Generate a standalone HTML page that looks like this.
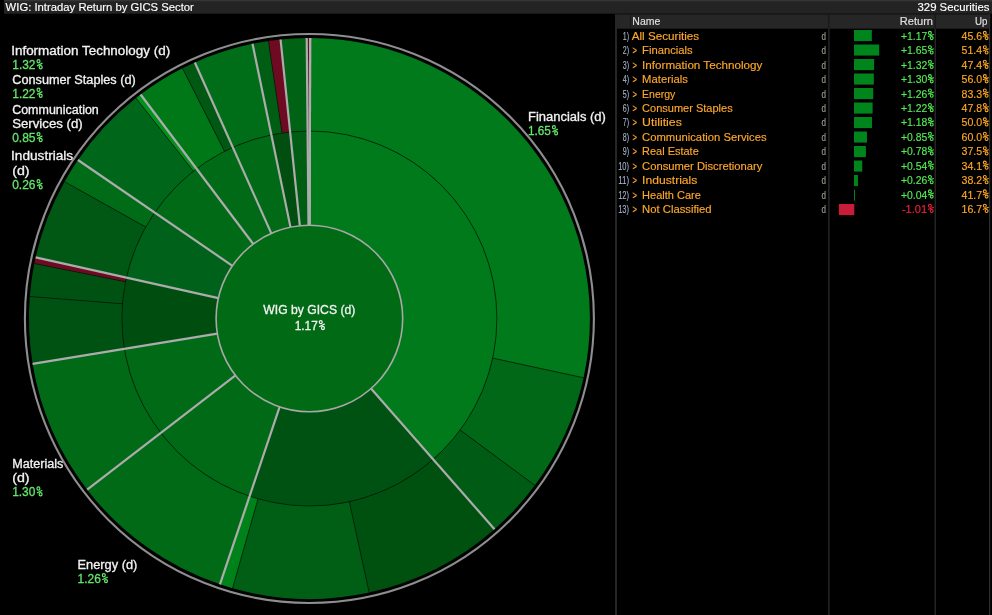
<!DOCTYPE html>
<html><head><meta charset="utf-8">
<style>
html,body{margin:0;padding:0;background:#000;width:992px;height:615px;overflow:hidden}
svg{position:absolute;left:0;top:0;will-change:transform}
text{font-family:"Liberation Sans",sans-serif;white-space:pre}
</style></head><body>
<svg width="992" height="615">
<rect x="4" y="0" width="988" height="13.7" fill="#232323"/>
<rect x="4" y="0" width="988" height="1.3" fill="#353535"/>
<rect x="615" y="14.3" width="375" height="14.4" fill="#262626"/>
<rect x="630" y="14.3" width="1" height="14.4" fill="#1a1a1a"/>
<rect x="615" y="14.3" width="2" height="600.7" fill="#262626"/>
<rect x="828.3" y="14.3" width="1.2" height="600.7" fill="#2e2e2e"/>
<rect x="828.3" y="14.3" width="1.2" height="14.4" fill="#141414"/>
<rect x="934.6" y="14.3" width="1.2" height="600.7" fill="#2e2e2e"/>
<rect x="934.6" y="14.3" width="1.2" height="14.4" fill="#141414"/>
<rect x="989" y="14.3" width="1.2" height="600.7" fill="#2e2e2e"/>
<circle cx="309.4" cy="318.5" r="284.5" fill="none" stroke="#8e8e8e" stroke-width="2.1"/>
<path d="M309.89,131.00 A187.5,187.5 0 0 1 433.15,459.36 L370.98,388.59 A93.3,93.3 0 0 0 309.64,225.20 Z" fill="#007a1a"/>
<path d="M310.13,38.00 A280.5,280.5 0 0 1 583.57,377.78 L492.67,358.12 A187.5,187.5 0 0 0 309.89,131.00 Z" fill="#007a1a"/>
<path d="M583.57,377.78 A280.5,280.5 0 0 1 534.88,485.35 L460.12,430.03 A187.5,187.5 0 0 0 492.67,358.12 Z" fill="#006816"/>
<path d="M534.88,485.35 A280.5,280.5 0 0 1 494.53,529.23 L433.15,459.36 A187.5,187.5 0 0 0 460.12,430.03 Z" fill="#005c14"/>
<path d="M433.15,459.36 A187.5,187.5 0 0 1 249.60,496.21 L279.64,406.93 A93.3,93.3 0 0 0 370.98,388.59 Z" fill="#005212"/>
<path d="M494.53,529.23 A280.5,280.5 0 0 1 369.16,592.56 L349.34,501.70 A187.5,187.5 0 0 0 433.15,459.36 Z" fill="#005010"/>
<path d="M369.16,592.56 A280.5,280.5 0 0 1 232.55,588.27 L258.03,498.83 A187.5,187.5 0 0 0 349.34,501.70 Z" fill="#005f14"/>
<path d="M232.55,588.27 A280.5,280.5 0 0 1 219.93,584.35 L249.60,496.21 A187.5,187.5 0 0 0 258.03,498.83 Z" fill="#00821b"/>
<path d="M249.60,496.21 A187.5,187.5 0 0 1 160.85,432.90 L235.48,375.43 A93.3,93.3 0 0 0 279.64,406.93 Z" fill="#006a17"/>
<path d="M219.93,584.35 A280.5,280.5 0 0 1 87.16,489.65 L160.85,432.90 A187.5,187.5 0 0 0 249.60,496.21 Z" fill="#006a17"/>
<path d="M160.85,432.90 A187.5,187.5 0 0 1 124.36,348.80 L217.33,333.58 A93.3,93.3 0 0 0 235.48,375.43 Z" fill="#006a17"/>
<path d="M87.16,489.65 A280.5,280.5 0 0 1 32.59,363.83 L124.36,348.80 A187.5,187.5 0 0 0 160.85,432.90 Z" fill="#006a17"/>
<path d="M124.36,348.80 A187.5,187.5 0 0 1 126.42,277.60 L218.35,298.15 A93.3,93.3 0 0 0 217.33,333.58 Z" fill="#004d10"/>
<path d="M32.59,363.83 A280.5,280.5 0 0 1 29.76,296.49 L122.48,303.79 A187.5,187.5 0 0 0 124.36,348.80 Z" fill="#005212"/>
<path d="M29.76,296.49 A280.5,280.5 0 0 1 34.34,263.54 L125.53,281.76 A187.5,187.5 0 0 0 122.48,303.79 Z" fill="#005212"/>
<path d="M34.34,263.54 A280.5,280.5 0 0 1 35.66,257.31 L126.42,277.60 A187.5,187.5 0 0 0 125.53,281.76 Z" fill="#6e0a22"/>
<path d="M126.42,277.60 A187.5,187.5 0 0 1 154.69,212.57 L232.42,265.79 A93.3,93.3 0 0 0 218.35,298.15 Z" fill="#00621a"/>
<path d="M35.66,257.31 A280.5,280.5 0 0 1 64.55,181.66 L145.73,227.03 A187.5,187.5 0 0 0 126.42,277.60 Z" fill="#005814"/>
<path d="M64.55,181.66 A280.5,280.5 0 0 1 77.96,160.03 L154.69,212.57 A187.5,187.5 0 0 0 145.73,227.03 Z" fill="#006c17"/>
<path d="M154.69,212.57 A187.5,187.5 0 0 1 196.56,168.76 L253.25,243.99 A93.3,93.3 0 0 0 232.42,265.79 Z" fill="#006a16"/>
<path d="M77.96,160.03 A280.5,280.5 0 0 1 135.94,98.07 L193.45,171.15 A187.5,187.5 0 0 0 154.69,212.57 Z" fill="#00661a"/>
<path d="M135.94,98.07 A280.5,280.5 0 0 1 140.59,94.48 L196.56,168.76 A187.5,187.5 0 0 0 193.45,171.15 Z" fill="#00921c"/>
<path d="M196.56,168.76 A187.5,187.5 0 0 1 232.84,147.34 L271.30,233.33 A93.3,93.3 0 0 0 253.25,243.99 Z" fill="#006a16"/>
<path d="M140.59,94.48 A280.5,280.5 0 0 1 182.49,68.35 L224.57,151.29 A187.5,187.5 0 0 0 196.56,168.76 Z" fill="#007818"/>
<path d="M182.49,68.35 A280.5,280.5 0 0 1 194.86,62.45 L232.84,147.34 A187.5,187.5 0 0 0 224.57,151.29 Z" fill="#005812"/>
<path d="M232.84,147.34 A187.5,187.5 0 0 1 271.38,134.90 L290.48,227.14 A93.3,93.3 0 0 0 271.30,233.33 Z" fill="#006a16"/>
<path d="M194.86,62.45 A280.5,280.5 0 0 1 252.52,43.83 L271.38,134.90 A187.5,187.5 0 0 0 232.84,147.34 Z" fill="#006e18"/>
<path d="M271.38,134.90 A187.5,187.5 0 0 1 290.13,131.99 L299.81,225.69 A93.3,93.3 0 0 0 290.48,227.14 Z" fill="#004f10"/>
<path d="M252.52,43.83 A280.5,280.5 0 0 1 268.42,41.01 L282.01,133.01 A187.5,187.5 0 0 0 271.38,134.90 Z" fill="#005e14"/>
<path d="M268.42,41.01 A280.5,280.5 0 0 1 280.57,39.49 L290.13,131.99 A187.5,187.5 0 0 0 282.01,133.01 Z" fill="#6e0a22"/>
<path d="M290.13,131.99 A187.5,187.5 0 0 1 307.60,131.01 L308.50,225.20 A93.3,93.3 0 0 0 299.81,225.69 Z" fill="#005e14"/>
<path d="M280.57,39.49 A280.5,280.5 0 0 1 306.71,38.01 L307.60,131.01 A187.5,187.5 0 0 0 290.13,131.99 Z" fill="#006214"/>
<path d="M307.60,131.01 A187.5,187.5 0 0 1 309.89,131.00 L309.64,225.20 A93.3,93.3 0 0 0 308.50,225.20 Z" fill="#6e0a22"/>
<path d="M306.71,38.01 A280.5,280.5 0 0 1 310.13,38.00 L309.89,131.00 A187.5,187.5 0 0 0 307.60,131.01 Z" fill="#6e0a22"/>
<line x1="492.67" y1="358.12" x2="583.57" y2="377.78" stroke="#031a06" stroke-width="0.7"/>
<line x1="460.12" y1="430.03" x2="534.88" y2="485.35" stroke="#031a06" stroke-width="0.7"/>
<line x1="349.34" y1="501.70" x2="369.16" y2="592.56" stroke="#031a06" stroke-width="0.7"/>
<line x1="258.03" y1="498.83" x2="232.55" y2="588.27" stroke="#031a06" stroke-width="0.7"/>
<line x1="122.48" y1="303.79" x2="29.76" y2="296.49" stroke="#031a06" stroke-width="0.7"/>
<line x1="125.53" y1="281.76" x2="34.34" y2="263.54" stroke="#031a06" stroke-width="0.7"/>
<line x1="145.73" y1="227.03" x2="64.55" y2="181.66" stroke="#031a06" stroke-width="0.7"/>
<line x1="193.45" y1="171.15" x2="135.94" y2="98.07" stroke="#031a06" stroke-width="0.7"/>
<line x1="224.57" y1="151.29" x2="182.49" y2="68.35" stroke="#031a06" stroke-width="0.7"/>
<line x1="282.01" y1="133.01" x2="268.42" y2="41.01" stroke="#031a06" stroke-width="0.7"/>
<circle cx="309.4" cy="318.5" r="187.5" fill="none" stroke="#031a06" stroke-width="0.7"/>
<line x1="309.64" y1="225.20" x2="310.13" y2="38.00" stroke="#acacac" stroke-width="2.2"/>
<line x1="370.98" y1="388.59" x2="494.53" y2="529.23" stroke="#acacac" stroke-width="2.2"/>
<line x1="279.64" y1="406.93" x2="219.93" y2="584.35" stroke="#acacac" stroke-width="2.2"/>
<line x1="235.48" y1="375.43" x2="87.16" y2="489.65" stroke="#acacac" stroke-width="2.2"/>
<line x1="217.33" y1="333.58" x2="32.59" y2="363.83" stroke="#acacac" stroke-width="2.2"/>
<line x1="218.35" y1="298.15" x2="35.66" y2="257.31" stroke="#acacac" stroke-width="2.2"/>
<line x1="232.42" y1="265.79" x2="77.96" y2="160.03" stroke="#acacac" stroke-width="2.2"/>
<line x1="253.25" y1="243.99" x2="140.59" y2="94.48" stroke="#acacac" stroke-width="2.2"/>
<line x1="271.30" y1="233.33" x2="194.86" y2="62.45" stroke="#acacac" stroke-width="2.2"/>
<line x1="290.48" y1="227.14" x2="252.52" y2="43.83" stroke="#acacac" stroke-width="2.2"/>
<line x1="299.81" y1="225.69" x2="280.57" y2="39.49" stroke="#acacac" stroke-width="2.2"/>
<line x1="308.50" y1="225.20" x2="306.71" y2="38.01" stroke="#acacac" stroke-width="2.2"/>
<line x1="309.64" y1="225.20" x2="310.13" y2="38.00" stroke="#acacac" stroke-width="2.2"/>
<circle cx="309.4" cy="318.5" r="93.3" fill="#006a14" stroke="#a8a8a8" stroke-width="1.6"/>
<rect x="854" y="30.00" width="17.84" height="11.1" fill="#00841c"/>
<rect x="854" y="44.50" width="25.16" height="11.1" fill="#00841c"/>
<rect x="854" y="59.00" width="20.13" height="11.1" fill="#00841c"/>
<rect x="854" y="73.50" width="19.82" height="11.1" fill="#00841c"/>
<rect x="854" y="88.00" width="19.21" height="11.1" fill="#00841c"/>
<rect x="854" y="102.50" width="18.61" height="11.1" fill="#00841c"/>
<rect x="854" y="117.00" width="17.99" height="11.1" fill="#00841c"/>
<rect x="854" y="131.50" width="12.96" height="11.1" fill="#00841c"/>
<rect x="854" y="146.00" width="11.89" height="11.1" fill="#00841c"/>
<rect x="854" y="160.50" width="8.24" height="11.1" fill="#00841c"/>
<rect x="854" y="175.00" width="3.97" height="11.1" fill="#00841c"/>
<rect x="854" y="189.50" width="1.00" height="11.1" fill="#00841c"/>
<rect x="838.90" y="204.00" width="15.40" height="11.1" fill="#c81c38"/>
<text x="5.60" y="11.00" font-size="11.6" fill="#ffffff" stroke="#ffffff" stroke-width="0.15" textLength="188.26" lengthAdjust="spacingAndGlyphs">WIG: Intraday Return by GICS Sector</text>
<text x="917.50" y="11.00" font-size="11.6" fill="#ffffff" stroke="#ffffff" stroke-width="0.15" textLength="72.00" lengthAdjust="spacingAndGlyphs">329 Securities</text>
<text x="11.18" y="54.60" font-size="12.0" fill="#f2f2f2" stroke="#f2f2f2" stroke-width="0.3" textLength="159.01" lengthAdjust="spacingAndGlyphs">Information Technology (d)</text>
<text x="12.30" y="69.10" font-size="12.0" fill="#62e66a" stroke="#62e66a" stroke-width="0.3" textLength="23.18" lengthAdjust="spacingAndGlyphs">1.32</text>
<g fill="none" stroke="#62e66a" stroke-width="1.25"><ellipse cx="38.50" cy="61.30" rx="1.45" ry="1.6"/><ellipse cx="40.70" cy="67.20" rx="1.45" ry="1.6"/><line x1="42.40" y1="63.10" x2="37.00" y2="65.90"/></g>
<text x="12.30" y="83.60" font-size="12.0" fill="#f2f2f2" stroke="#f2f2f2" stroke-width="0.3" textLength="123.40" lengthAdjust="spacingAndGlyphs">Consumer Staples (d)</text>
<text x="12.30" y="97.60" font-size="12.0" fill="#62e66a" stroke="#62e66a" stroke-width="0.3" textLength="23.18" lengthAdjust="spacingAndGlyphs">1.22</text>
<g fill="none" stroke="#62e66a" stroke-width="1.25"><ellipse cx="38.50" cy="89.80" rx="1.45" ry="1.6"/><ellipse cx="40.70" cy="95.70" rx="1.45" ry="1.6"/><line x1="42.40" y1="91.60" x2="37.00" y2="94.40"/></g>
<text x="12.20" y="113.70" font-size="12.0" fill="#f2f2f2" stroke="#f2f2f2" stroke-width="0.3" textLength="86.60" lengthAdjust="spacingAndGlyphs">Communication</text>
<text x="12.20" y="127.50" font-size="12.0" fill="#f2f2f2" stroke="#f2f2f2" stroke-width="0.3" textLength="70.50" lengthAdjust="spacingAndGlyphs">Services (d)</text>
<text x="12.20" y="141.90" font-size="12.0" fill="#62e66a" stroke="#62e66a" stroke-width="0.3">0.85</text>
<g fill="none" stroke="#62e66a" stroke-width="1.25"><ellipse cx="38.50" cy="134.10" rx="1.45" ry="1.6"/><ellipse cx="40.70" cy="140.00" rx="1.45" ry="1.6"/><line x1="42.40" y1="135.90" x2="37.00" y2="138.70"/></g>
<text x="11.06" y="160.40" font-size="12.0" fill="#f2f2f2" stroke="#f2f2f2" stroke-width="0.3" textLength="62.14" lengthAdjust="spacingAndGlyphs">Industrials</text>
<text x="12.20" y="174.50" font-size="12.0" fill="#f2f2f2" stroke="#f2f2f2" stroke-width="0.3" textLength="17.40" lengthAdjust="spacingAndGlyphs">(d)</text>
<text x="12.20" y="189.10" font-size="12.0" fill="#62e66a" stroke="#62e66a" stroke-width="0.3">0.26</text>
<g fill="none" stroke="#62e66a" stroke-width="1.25"><ellipse cx="38.50" cy="181.30" rx="1.45" ry="1.6"/><ellipse cx="40.70" cy="187.20" rx="1.45" ry="1.6"/><line x1="42.40" y1="183.10" x2="37.00" y2="185.90"/></g>
<text x="12.20" y="467.70" font-size="12.0" fill="#f2f2f2" stroke="#f2f2f2" stroke-width="0.3" textLength="51.20" lengthAdjust="spacingAndGlyphs">Materials</text>
<text x="12.20" y="481.60" font-size="12.0" fill="#f2f2f2" stroke="#f2f2f2" stroke-width="0.3" textLength="17.40" lengthAdjust="spacingAndGlyphs">(d)</text>
<text x="12.20" y="496.20" font-size="12.0" fill="#62e66a" stroke="#62e66a" stroke-width="0.3" textLength="23.18" lengthAdjust="spacingAndGlyphs">1.30</text>
<g fill="none" stroke="#62e66a" stroke-width="1.25"><ellipse cx="38.40" cy="488.40" rx="1.45" ry="1.6"/><ellipse cx="40.60" cy="494.30" rx="1.45" ry="1.6"/><line x1="42.30" y1="490.20" x2="36.90" y2="493.00"/></g>
<text x="77.60" y="569.00" font-size="12.0" fill="#f2f2f2" stroke="#f2f2f2" stroke-width="0.3" textLength="59.70" lengthAdjust="spacingAndGlyphs">Energy (d)</text>
<text x="77.60" y="583.00" font-size="12.0" fill="#62e66a" stroke="#62e66a" stroke-width="0.3" textLength="23.18" lengthAdjust="spacingAndGlyphs">1.26</text>
<g fill="none" stroke="#62e66a" stroke-width="1.25"><ellipse cx="103.80" cy="575.20" rx="1.45" ry="1.6"/><ellipse cx="106.00" cy="581.10" rx="1.45" ry="1.6"/><line x1="107.70" y1="577.00" x2="102.30" y2="579.80"/></g>
<text x="528.00" y="120.50" font-size="12.0" fill="#f2f2f2" stroke="#f2f2f2" stroke-width="0.3" textLength="77.90" lengthAdjust="spacingAndGlyphs">Financials (d)</text>
<text x="528.00" y="135.10" font-size="12.0" fill="#62e66a" stroke="#62e66a" stroke-width="0.3" textLength="22.88" lengthAdjust="spacingAndGlyphs">1.65</text>
<g fill="none" stroke="#62e66a" stroke-width="1.25"><ellipse cx="553.90" cy="127.30" rx="1.45" ry="1.6"/><ellipse cx="556.10" cy="133.20" rx="1.45" ry="1.6"/><line x1="557.80" y1="129.10" x2="552.40" y2="131.90"/></g>
<text x="263.30" y="313.60" font-size="12.0" fill="#f2f2f2" stroke="#f2f2f2" stroke-width="0.3" textLength="92.00" lengthAdjust="spacingAndGlyphs">WIG by GICS (d)</text>
<text x="294.75" y="329.90" font-size="12.0" fill="#f2f2f2" stroke="#f2f2f2" stroke-width="0.3" textLength="22.98" lengthAdjust="spacingAndGlyphs">1.17</text>
<g fill="none" stroke="#f2f2f2" stroke-width="1.25"><ellipse cx="320.75" cy="322.10" rx="1.45" ry="1.6"/><ellipse cx="322.95" cy="328.00" rx="1.45" ry="1.6"/><line x1="324.65" y1="323.90" x2="319.25" y2="326.70"/></g>
<text x="632.30" y="25.00" font-size="10.5" fill="#e0e0e0" stroke="#e0e0e0" stroke-width="0.15">Name</text>
<text x="899.70" y="25.00" font-size="10.5" fill="#e0e0e0" stroke="#e0e0e0" stroke-width="0.15" textLength="33.33" lengthAdjust="spacingAndGlyphs">Return</text>
<text x="975.10" y="25.00" font-size="10.5" fill="#e0e0e0" stroke="#e0e0e0" stroke-width="0.15" textLength="12.45" lengthAdjust="spacingAndGlyphs">Up</text>
<text x="622.70" y="40.00" font-size="10.5" fill="#a8b8d0" stroke="#a8b8d0" stroke-width="0.1" textLength="6.34" lengthAdjust="spacingAndGlyphs">1)</text>
<text x="631.70" y="40.00" font-size="10.5" fill="#ffa82a" stroke="#ffa82a" stroke-width="0.15" textLength="67.48" lengthAdjust="spacingAndGlyphs">All Securities</text>
<text x="821.50" y="40.00" font-size="10.5" fill="#a09a90" stroke="#a09a90" stroke-width="0.15" textLength="4.48" lengthAdjust="spacingAndGlyphs">d</text>
<text x="900.90" y="40.00" font-size="10.5" fill="#52ee52" stroke="#52ee52" stroke-width="0.15" textLength="26.34" lengthAdjust="spacingAndGlyphs">+1.17</text>
<g fill="none" stroke="#52ee52" stroke-width="1.1"><ellipse cx="929.90" cy="32.90" rx="1.45" ry="1.5"/><ellipse cx="931.70" cy="38.10" rx="1.45" ry="1.5"/><line x1="933.80" y1="34.40" x2="927.90" y2="36.50"/></g>
<text x="961.50" y="40.00" font-size="10.5" fill="#ffa824" stroke="#ffa824" stroke-width="0.15" textLength="20.64" lengthAdjust="spacingAndGlyphs">45.6</text>
<g fill="none" stroke="#ffa824" stroke-width="1.1"><ellipse cx="984.80" cy="32.90" rx="1.45" ry="1.5"/><ellipse cx="986.60" cy="38.10" rx="1.45" ry="1.5"/><line x1="988.70" y1="34.40" x2="982.80" y2="36.50"/></g>
<text x="622.70" y="54.41" font-size="10.5" fill="#a8b8d0" stroke="#a8b8d0" stroke-width="0.1" textLength="6.34" lengthAdjust="spacingAndGlyphs">2)</text>
<text x="632.40" y="54.41" font-size="10.5" fill="#ffa82a" stroke="#ffa82a" stroke-width="0.15" textLength="4.50" lengthAdjust="spacingAndGlyphs">&gt;</text>
<text x="642.10" y="54.41" font-size="10.5" fill="#ffa82a" stroke="#ffa82a" stroke-width="0.15" textLength="50.47" lengthAdjust="spacingAndGlyphs">Financials</text>
<text x="821.50" y="54.41" font-size="10.5" fill="#a09a90" stroke="#a09a90" stroke-width="0.15" textLength="4.48" lengthAdjust="spacingAndGlyphs">d</text>
<text x="900.90" y="54.41" font-size="10.5" fill="#52ee52" stroke="#52ee52" stroke-width="0.15" textLength="26.34" lengthAdjust="spacingAndGlyphs">+1.65</text>
<g fill="none" stroke="#52ee52" stroke-width="1.1"><ellipse cx="929.90" cy="47.31" rx="1.45" ry="1.5"/><ellipse cx="931.70" cy="52.51" rx="1.45" ry="1.5"/><line x1="933.80" y1="48.81" x2="927.90" y2="50.91"/></g>
<text x="961.50" y="54.41" font-size="10.5" fill="#ffa824" stroke="#ffa824" stroke-width="0.15" textLength="20.64" lengthAdjust="spacingAndGlyphs">51.4</text>
<g fill="none" stroke="#ffa824" stroke-width="1.1"><ellipse cx="984.80" cy="47.31" rx="1.45" ry="1.5"/><ellipse cx="986.60" cy="52.51" rx="1.45" ry="1.5"/><line x1="988.70" y1="48.81" x2="982.80" y2="50.91"/></g>
<text x="622.70" y="68.82" font-size="10.5" fill="#a8b8d0" stroke="#a8b8d0" stroke-width="0.1" textLength="6.34" lengthAdjust="spacingAndGlyphs">3)</text>
<text x="632.40" y="68.82" font-size="10.5" fill="#ffa82a" stroke="#ffa82a" stroke-width="0.15" textLength="4.50" lengthAdjust="spacingAndGlyphs">&gt;</text>
<text x="642.10" y="68.82" font-size="10.5" fill="#ffa82a" stroke="#ffa82a" stroke-width="0.15" textLength="120.17" lengthAdjust="spacingAndGlyphs">Information Technology</text>
<text x="821.50" y="68.82" font-size="10.5" fill="#a09a90" stroke="#a09a90" stroke-width="0.15" textLength="4.48" lengthAdjust="spacingAndGlyphs">d</text>
<text x="900.90" y="68.82" font-size="10.5" fill="#52ee52" stroke="#52ee52" stroke-width="0.15" textLength="26.34" lengthAdjust="spacingAndGlyphs">+1.32</text>
<g fill="none" stroke="#52ee52" stroke-width="1.1"><ellipse cx="929.90" cy="61.72" rx="1.45" ry="1.5"/><ellipse cx="931.70" cy="66.92" rx="1.45" ry="1.5"/><line x1="933.80" y1="63.22" x2="927.90" y2="65.32"/></g>
<text x="961.50" y="68.82" font-size="10.5" fill="#ffa824" stroke="#ffa824" stroke-width="0.15" textLength="20.64" lengthAdjust="spacingAndGlyphs">47.4</text>
<g fill="none" stroke="#ffa824" stroke-width="1.1"><ellipse cx="984.80" cy="61.72" rx="1.45" ry="1.5"/><ellipse cx="986.60" cy="66.92" rx="1.45" ry="1.5"/><line x1="988.70" y1="63.22" x2="982.80" y2="65.32"/></g>
<text x="622.70" y="83.23" font-size="10.5" fill="#a8b8d0" stroke="#a8b8d0" stroke-width="0.1" textLength="6.34" lengthAdjust="spacingAndGlyphs">4)</text>
<text x="632.40" y="83.23" font-size="10.5" fill="#ffa82a" stroke="#ffa82a" stroke-width="0.15" textLength="4.50" lengthAdjust="spacingAndGlyphs">&gt;</text>
<text x="642.10" y="83.23" font-size="10.5" fill="#ffa82a" stroke="#ffa82a" stroke-width="0.15" textLength="45.77" lengthAdjust="spacingAndGlyphs">Materials</text>
<text x="821.50" y="83.23" font-size="10.5" fill="#a09a90" stroke="#a09a90" stroke-width="0.15" textLength="4.48" lengthAdjust="spacingAndGlyphs">d</text>
<text x="900.90" y="83.23" font-size="10.5" fill="#52ee52" stroke="#52ee52" stroke-width="0.15" textLength="26.34" lengthAdjust="spacingAndGlyphs">+1.30</text>
<g fill="none" stroke="#52ee52" stroke-width="1.1"><ellipse cx="929.90" cy="76.13" rx="1.45" ry="1.5"/><ellipse cx="931.70" cy="81.33" rx="1.45" ry="1.5"/><line x1="933.80" y1="77.63" x2="927.90" y2="79.73"/></g>
<text x="961.50" y="83.23" font-size="10.5" fill="#ffa824" stroke="#ffa824" stroke-width="0.15" textLength="20.64" lengthAdjust="spacingAndGlyphs">56.0</text>
<g fill="none" stroke="#ffa824" stroke-width="1.1"><ellipse cx="984.80" cy="76.13" rx="1.45" ry="1.5"/><ellipse cx="986.60" cy="81.33" rx="1.45" ry="1.5"/><line x1="988.70" y1="77.63" x2="982.80" y2="79.73"/></g>
<text x="622.70" y="97.64" font-size="10.5" fill="#a8b8d0" stroke="#a8b8d0" stroke-width="0.1" textLength="6.34" lengthAdjust="spacingAndGlyphs">5)</text>
<text x="632.40" y="97.64" font-size="10.5" fill="#ffa82a" stroke="#ffa82a" stroke-width="0.15" textLength="4.50" lengthAdjust="spacingAndGlyphs">&gt;</text>
<text x="642.10" y="97.64" font-size="10.5" fill="#ffa82a" stroke="#ffa82a" stroke-width="0.15">Energy</text>
<text x="821.50" y="97.64" font-size="10.5" fill="#a09a90" stroke="#a09a90" stroke-width="0.15" textLength="4.48" lengthAdjust="spacingAndGlyphs">d</text>
<text x="900.90" y="97.64" font-size="10.5" fill="#52ee52" stroke="#52ee52" stroke-width="0.15" textLength="26.34" lengthAdjust="spacingAndGlyphs">+1.26</text>
<g fill="none" stroke="#52ee52" stroke-width="1.1"><ellipse cx="929.90" cy="90.54" rx="1.45" ry="1.5"/><ellipse cx="931.70" cy="95.74" rx="1.45" ry="1.5"/><line x1="933.80" y1="92.04" x2="927.90" y2="94.14"/></g>
<text x="961.50" y="97.64" font-size="10.5" fill="#ffa824" stroke="#ffa824" stroke-width="0.15" textLength="20.64" lengthAdjust="spacingAndGlyphs">83.3</text>
<g fill="none" stroke="#ffa824" stroke-width="1.1"><ellipse cx="984.80" cy="90.54" rx="1.45" ry="1.5"/><ellipse cx="986.60" cy="95.74" rx="1.45" ry="1.5"/><line x1="988.70" y1="92.04" x2="982.80" y2="94.14"/></g>
<text x="622.70" y="112.05" font-size="10.5" fill="#a8b8d0" stroke="#a8b8d0" stroke-width="0.1" textLength="6.34" lengthAdjust="spacingAndGlyphs">6)</text>
<text x="632.40" y="112.05" font-size="10.5" fill="#ffa82a" stroke="#ffa82a" stroke-width="0.15" textLength="4.50" lengthAdjust="spacingAndGlyphs">&gt;</text>
<text x="642.10" y="112.05" font-size="10.5" fill="#ffa82a" stroke="#ffa82a" stroke-width="0.15" textLength="90.56" lengthAdjust="spacingAndGlyphs">Consumer Staples</text>
<text x="821.50" y="112.05" font-size="10.5" fill="#a09a90" stroke="#a09a90" stroke-width="0.15" textLength="4.48" lengthAdjust="spacingAndGlyphs">d</text>
<text x="900.90" y="112.05" font-size="10.5" fill="#52ee52" stroke="#52ee52" stroke-width="0.15" textLength="26.34" lengthAdjust="spacingAndGlyphs">+1.22</text>
<g fill="none" stroke="#52ee52" stroke-width="1.1"><ellipse cx="929.90" cy="104.95" rx="1.45" ry="1.5"/><ellipse cx="931.70" cy="110.15" rx="1.45" ry="1.5"/><line x1="933.80" y1="106.45" x2="927.90" y2="108.55"/></g>
<text x="961.50" y="112.05" font-size="10.5" fill="#ffa824" stroke="#ffa824" stroke-width="0.15" textLength="20.64" lengthAdjust="spacingAndGlyphs">47.8</text>
<g fill="none" stroke="#ffa824" stroke-width="1.1"><ellipse cx="984.80" cy="104.95" rx="1.45" ry="1.5"/><ellipse cx="986.60" cy="110.15" rx="1.45" ry="1.5"/><line x1="988.70" y1="106.45" x2="982.80" y2="108.55"/></g>
<text x="622.70" y="126.46" font-size="10.5" fill="#a8b8d0" stroke="#a8b8d0" stroke-width="0.1" textLength="6.34" lengthAdjust="spacingAndGlyphs">7)</text>
<text x="632.40" y="126.46" font-size="10.5" fill="#ffa82a" stroke="#ffa82a" stroke-width="0.15" textLength="4.50" lengthAdjust="spacingAndGlyphs">&gt;</text>
<text x="642.10" y="126.46" font-size="10.5" fill="#ffa82a" stroke="#ffa82a" stroke-width="0.15" textLength="39.79" lengthAdjust="spacingAndGlyphs">Utilities</text>
<text x="821.50" y="126.46" font-size="10.5" fill="#a09a90" stroke="#a09a90" stroke-width="0.15" textLength="4.48" lengthAdjust="spacingAndGlyphs">d</text>
<text x="900.90" y="126.46" font-size="10.5" fill="#52ee52" stroke="#52ee52" stroke-width="0.15" textLength="26.34" lengthAdjust="spacingAndGlyphs">+1.18</text>
<g fill="none" stroke="#52ee52" stroke-width="1.1"><ellipse cx="929.90" cy="119.36" rx="1.45" ry="1.5"/><ellipse cx="931.70" cy="124.56" rx="1.45" ry="1.5"/><line x1="933.80" y1="120.86" x2="927.90" y2="122.96"/></g>
<text x="961.50" y="126.46" font-size="10.5" fill="#ffa824" stroke="#ffa824" stroke-width="0.15" textLength="20.64" lengthAdjust="spacingAndGlyphs">50.0</text>
<g fill="none" stroke="#ffa824" stroke-width="1.1"><ellipse cx="984.80" cy="119.36" rx="1.45" ry="1.5"/><ellipse cx="986.60" cy="124.56" rx="1.45" ry="1.5"/><line x1="988.70" y1="120.86" x2="982.80" y2="122.96"/></g>
<text x="622.70" y="140.87" font-size="10.5" fill="#a8b8d0" stroke="#a8b8d0" stroke-width="0.1" textLength="6.34" lengthAdjust="spacingAndGlyphs">8)</text>
<text x="632.40" y="140.87" font-size="10.5" fill="#ffa82a" stroke="#ffa82a" stroke-width="0.15" textLength="4.50" lengthAdjust="spacingAndGlyphs">&gt;</text>
<text x="642.10" y="140.87" font-size="10.5" fill="#ffa82a" stroke="#ffa82a" stroke-width="0.15" textLength="124.47" lengthAdjust="spacingAndGlyphs">Communication Services</text>
<text x="821.50" y="140.87" font-size="10.5" fill="#a09a90" stroke="#a09a90" stroke-width="0.15" textLength="4.48" lengthAdjust="spacingAndGlyphs">d</text>
<text x="900.90" y="140.87" font-size="10.5" fill="#52ee52" stroke="#52ee52" stroke-width="0.15" textLength="26.34" lengthAdjust="spacingAndGlyphs">+0.85</text>
<g fill="none" stroke="#52ee52" stroke-width="1.1"><ellipse cx="929.90" cy="133.77" rx="1.45" ry="1.5"/><ellipse cx="931.70" cy="138.97" rx="1.45" ry="1.5"/><line x1="933.80" y1="135.27" x2="927.90" y2="137.37"/></g>
<text x="961.50" y="140.87" font-size="10.5" fill="#ffa824" stroke="#ffa824" stroke-width="0.15" textLength="20.64" lengthAdjust="spacingAndGlyphs">60.0</text>
<g fill="none" stroke="#ffa824" stroke-width="1.1"><ellipse cx="984.80" cy="133.77" rx="1.45" ry="1.5"/><ellipse cx="986.60" cy="138.97" rx="1.45" ry="1.5"/><line x1="988.70" y1="135.27" x2="982.80" y2="137.37"/></g>
<text x="622.70" y="155.28" font-size="10.5" fill="#a8b8d0" stroke="#a8b8d0" stroke-width="0.1" textLength="6.34" lengthAdjust="spacingAndGlyphs">9)</text>
<text x="632.40" y="155.28" font-size="10.5" fill="#ffa82a" stroke="#ffa82a" stroke-width="0.15" textLength="4.50" lengthAdjust="spacingAndGlyphs">&gt;</text>
<text x="642.10" y="155.28" font-size="10.5" fill="#ffa82a" stroke="#ffa82a" stroke-width="0.15" textLength="56.63" lengthAdjust="spacingAndGlyphs">Real Estate</text>
<text x="821.50" y="155.28" font-size="10.5" fill="#a09a90" stroke="#a09a90" stroke-width="0.15" textLength="4.48" lengthAdjust="spacingAndGlyphs">d</text>
<text x="900.90" y="155.28" font-size="10.5" fill="#52ee52" stroke="#52ee52" stroke-width="0.15" textLength="26.34" lengthAdjust="spacingAndGlyphs">+0.78</text>
<g fill="none" stroke="#52ee52" stroke-width="1.1"><ellipse cx="929.90" cy="148.18" rx="1.45" ry="1.5"/><ellipse cx="931.70" cy="153.38" rx="1.45" ry="1.5"/><line x1="933.80" y1="149.68" x2="927.90" y2="151.78"/></g>
<text x="961.50" y="155.28" font-size="10.5" fill="#ffa824" stroke="#ffa824" stroke-width="0.15" textLength="20.64" lengthAdjust="spacingAndGlyphs">37.5</text>
<g fill="none" stroke="#ffa824" stroke-width="1.1"><ellipse cx="984.80" cy="148.18" rx="1.45" ry="1.5"/><ellipse cx="986.60" cy="153.38" rx="1.45" ry="1.5"/><line x1="988.70" y1="149.68" x2="982.80" y2="151.78"/></g>
<text x="618.20" y="169.69" font-size="10.5" fill="#a8b8d0" stroke="#a8b8d0" stroke-width="0.1" textLength="10.86" lengthAdjust="spacingAndGlyphs">10)</text>
<text x="632.40" y="169.69" font-size="10.5" fill="#ffa82a" stroke="#ffa82a" stroke-width="0.15" textLength="4.50" lengthAdjust="spacingAndGlyphs">&gt;</text>
<text x="642.10" y="169.69" font-size="10.5" fill="#ffa82a" stroke="#ffa82a" stroke-width="0.15" textLength="120.20" lengthAdjust="spacingAndGlyphs">Consumer Discretionary</text>
<text x="821.50" y="169.69" font-size="10.5" fill="#a09a90" stroke="#a09a90" stroke-width="0.15" textLength="4.48" lengthAdjust="spacingAndGlyphs">d</text>
<text x="900.90" y="169.69" font-size="10.5" fill="#52ee52" stroke="#52ee52" stroke-width="0.15" textLength="26.34" lengthAdjust="spacingAndGlyphs">+0.54</text>
<g fill="none" stroke="#52ee52" stroke-width="1.1"><ellipse cx="929.90" cy="162.59" rx="1.45" ry="1.5"/><ellipse cx="931.70" cy="167.79" rx="1.45" ry="1.5"/><line x1="933.80" y1="164.09" x2="927.90" y2="166.19"/></g>
<text x="961.50" y="169.69" font-size="10.5" fill="#ffa824" stroke="#ffa824" stroke-width="0.15" textLength="20.64" lengthAdjust="spacingAndGlyphs">34.1</text>
<g fill="none" stroke="#ffa824" stroke-width="1.1"><ellipse cx="984.80" cy="162.59" rx="1.45" ry="1.5"/><ellipse cx="986.60" cy="167.79" rx="1.45" ry="1.5"/><line x1="988.70" y1="164.09" x2="982.80" y2="166.19"/></g>
<text x="618.20" y="184.10" font-size="10.5" fill="#a8b8d0" stroke="#a8b8d0" stroke-width="0.1" textLength="10.88" lengthAdjust="spacingAndGlyphs">11)</text>
<text x="632.40" y="184.10" font-size="10.5" fill="#ffa82a" stroke="#ffa82a" stroke-width="0.15" textLength="4.50" lengthAdjust="spacingAndGlyphs">&gt;</text>
<text x="642.10" y="184.10" font-size="10.5" fill="#ffa82a" stroke="#ffa82a" stroke-width="0.15" textLength="55.29" lengthAdjust="spacingAndGlyphs">Industrials</text>
<text x="821.50" y="184.10" font-size="10.5" fill="#a09a90" stroke="#a09a90" stroke-width="0.15" textLength="4.48" lengthAdjust="spacingAndGlyphs">d</text>
<text x="900.90" y="184.10" font-size="10.5" fill="#52ee52" stroke="#52ee52" stroke-width="0.15" textLength="26.34" lengthAdjust="spacingAndGlyphs">+0.26</text>
<g fill="none" stroke="#52ee52" stroke-width="1.1"><ellipse cx="929.90" cy="177.00" rx="1.45" ry="1.5"/><ellipse cx="931.70" cy="182.20" rx="1.45" ry="1.5"/><line x1="933.80" y1="178.50" x2="927.90" y2="180.60"/></g>
<text x="961.50" y="184.10" font-size="10.5" fill="#ffa824" stroke="#ffa824" stroke-width="0.15" textLength="20.64" lengthAdjust="spacingAndGlyphs">38.2</text>
<g fill="none" stroke="#ffa824" stroke-width="1.1"><ellipse cx="984.80" cy="177.00" rx="1.45" ry="1.5"/><ellipse cx="986.60" cy="182.20" rx="1.45" ry="1.5"/><line x1="988.70" y1="178.50" x2="982.80" y2="180.60"/></g>
<text x="618.20" y="198.51" font-size="10.5" fill="#a8b8d0" stroke="#a8b8d0" stroke-width="0.1" textLength="10.86" lengthAdjust="spacingAndGlyphs">12)</text>
<text x="632.40" y="198.51" font-size="10.5" fill="#ffa82a" stroke="#ffa82a" stroke-width="0.15" textLength="4.50" lengthAdjust="spacingAndGlyphs">&gt;</text>
<text x="642.10" y="198.51" font-size="10.5" fill="#ffa82a" stroke="#ffa82a" stroke-width="0.15" textLength="58.73" lengthAdjust="spacingAndGlyphs">Health Care</text>
<text x="821.50" y="198.51" font-size="10.5" fill="#a09a90" stroke="#a09a90" stroke-width="0.15" textLength="4.48" lengthAdjust="spacingAndGlyphs">d</text>
<text x="900.90" y="198.51" font-size="10.5" fill="#52ee52" stroke="#52ee52" stroke-width="0.15" textLength="26.34" lengthAdjust="spacingAndGlyphs">+0.04</text>
<g fill="none" stroke="#52ee52" stroke-width="1.1"><ellipse cx="929.90" cy="191.41" rx="1.45" ry="1.5"/><ellipse cx="931.70" cy="196.61" rx="1.45" ry="1.5"/><line x1="933.80" y1="192.91" x2="927.90" y2="195.01"/></g>
<text x="961.50" y="198.51" font-size="10.5" fill="#ffa824" stroke="#ffa824" stroke-width="0.15" textLength="20.64" lengthAdjust="spacingAndGlyphs">41.7</text>
<g fill="none" stroke="#ffa824" stroke-width="1.1"><ellipse cx="984.80" cy="191.41" rx="1.45" ry="1.5"/><ellipse cx="986.60" cy="196.61" rx="1.45" ry="1.5"/><line x1="988.70" y1="192.91" x2="982.80" y2="195.01"/></g>
<text x="618.20" y="212.92" font-size="10.5" fill="#a8b8d0" stroke="#a8b8d0" stroke-width="0.1" textLength="10.86" lengthAdjust="spacingAndGlyphs">13)</text>
<text x="632.40" y="212.92" font-size="10.5" fill="#ffa82a" stroke="#ffa82a" stroke-width="0.15" textLength="4.50" lengthAdjust="spacingAndGlyphs">&gt;</text>
<text x="642.10" y="212.92" font-size="10.5" fill="#ffa82a" stroke="#ffa82a" stroke-width="0.15" textLength="69.53" lengthAdjust="spacingAndGlyphs">Not Classified</text>
<text x="821.50" y="212.92" font-size="10.5" fill="#a09a90" stroke="#a09a90" stroke-width="0.15" textLength="4.48" lengthAdjust="spacingAndGlyphs">d</text>
<text x="901.90" y="212.92" font-size="10.5" fill="#f0203c" stroke="#f0203c" stroke-width="0.15" textLength="25.33" lengthAdjust="spacingAndGlyphs">-1.01</text>
<g fill="none" stroke="#f0203c" stroke-width="1.1"><ellipse cx="929.90" cy="205.82" rx="1.45" ry="1.5"/><ellipse cx="931.70" cy="211.02" rx="1.45" ry="1.5"/><line x1="933.80" y1="207.32" x2="927.90" y2="209.42"/></g>
<text x="961.50" y="212.92" font-size="10.5" fill="#ffa824" stroke="#ffa824" stroke-width="0.15" textLength="20.64" lengthAdjust="spacingAndGlyphs">16.7</text>
<g fill="none" stroke="#ffa824" stroke-width="1.1"><ellipse cx="984.80" cy="205.82" rx="1.45" ry="1.5"/><ellipse cx="986.60" cy="211.02" rx="1.45" ry="1.5"/><line x1="988.70" y1="207.32" x2="982.80" y2="209.42"/></g>
</svg>
</body></html>
